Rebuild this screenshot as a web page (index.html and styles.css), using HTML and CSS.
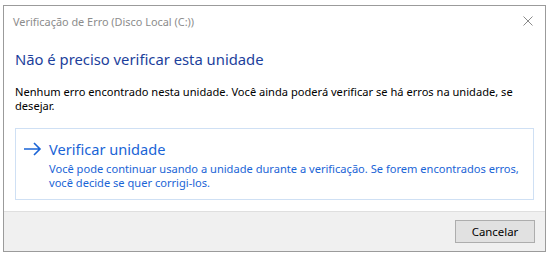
FILE: index.html
```html
<!DOCTYPE html>
<html lang="pt-BR">
<head>
<meta charset="utf-8">
<title>Verificação de Erro</title>
<link rel="stylesheet" href="styles.css">
</head>
<body>
<div class="window">
  <div class="titlebar">
    <span class="title">Verificação de Erro (Disco Local (C:))</span>
    <svg class="close" width="10" height="10" viewBox="0 0 10 10"><path d="M0.5 0.5 L9.5 9.5 M9.5 0.5 L0.5 9.5" stroke="#8a8a8a" stroke-width="1" fill="none"/></svg>
  </div>
  <div class="content">
    <h1 class="instruction">Não é preciso verificar esta unidade</h1>
    <p class="body-text">Nenhum erro encontrado nesta unidade. Você ainda poderá verificar se há erros na unidade, se desejar.</p>
    <div class="command">
      <svg class="arrow" width="19" height="14" viewBox="0 0 19 14"><path d="M1 7 H17 M11 1 L17 7 L11 13" stroke="#1a64d6" stroke-width="1.6" fill="none"/></svg>
      <div class="command-text">
        <div class="command-title">Verificar unidade</div>
        <div class="command-desc">Você pode continuar usando a unidade durante a verificação. Se forem encontrados erros, você decide se quer corrigi-los.</div>
      </div>
    </div>
  </div>
  <div class="footer">
    <button class="btn">Cancelar</button>
  </div>
</div>
</body>
</html>
```
FILE: styles.css
```css
html, body {
  margin: 0;
  padding: 0;
  background: #ffffff;
}
body {
  padding: 5px 0 0 3px;
  font-family: "Noto Sans", "Open Sans", sans-serif;
}
.window {
  width: 541px;
  height: 245px;
  border: 1px solid #9b9b9b;
  background: #ffffff;
  display: flex;
  flex-direction: column;
  box-sizing: content-box;
}
.titlebar {
  height: 30px;
  flex: none;
  display: flex;
  align-items: center;
  justify-content: space-between;
  padding: 0 12px 0 9px;
}
.title {
  font-size: 10.9px;
  color: #8c8c8c;
}
.content {
  flex: 1;
  padding: 0 11px 0 11px;
}
.instruction {
  margin: 13px 0 0 0;
  font-weight: normal;
  font-size: 14.8px;
  line-height: 20px;
  color: #1d3f9c;
}
.body-text {
  margin: 16px 0 0 0;
  font-size: 11.1px;
  line-height: 14px;
  color: #000000;
}
.command {
  margin-top: 15px;
  border: 1px solid #cfe0f4;
  height: 72px;
  box-sizing: border-box;
  display: flex;
  align-items: flex-start;
  padding: 10px 1px 0 7px;
}
.arrow {
  margin-top: 3px;
  margin-right: 7px;
  flex: none;
}
.command-text {
  color: #1a64d6;
}
.command-title {
  font-size: 14.6px;
  line-height: 20px;
}
.command-desc {
  margin-top: 3px;
  font-size: 11.1px;
  line-height: 14px;
}
.footer {
  height: 40px;
  flex: none;
  background: #f0f0f0;
  border-top: 1px solid #dfdfdf;
  display: flex;
  justify-content: flex-end;
  align-items: flex-start;
  padding: 8px 10px 0 0;
  box-sizing: border-box;
}
.btn {
  width: 80px;
  height: 23px;
  background: #e1e1e1;
  border: 1px solid #adadad;
  font-family: "Noto Sans", "Open Sans", sans-serif;
  font-size: 11.4px;
  color: #000;
  padding: 0;
}
```
